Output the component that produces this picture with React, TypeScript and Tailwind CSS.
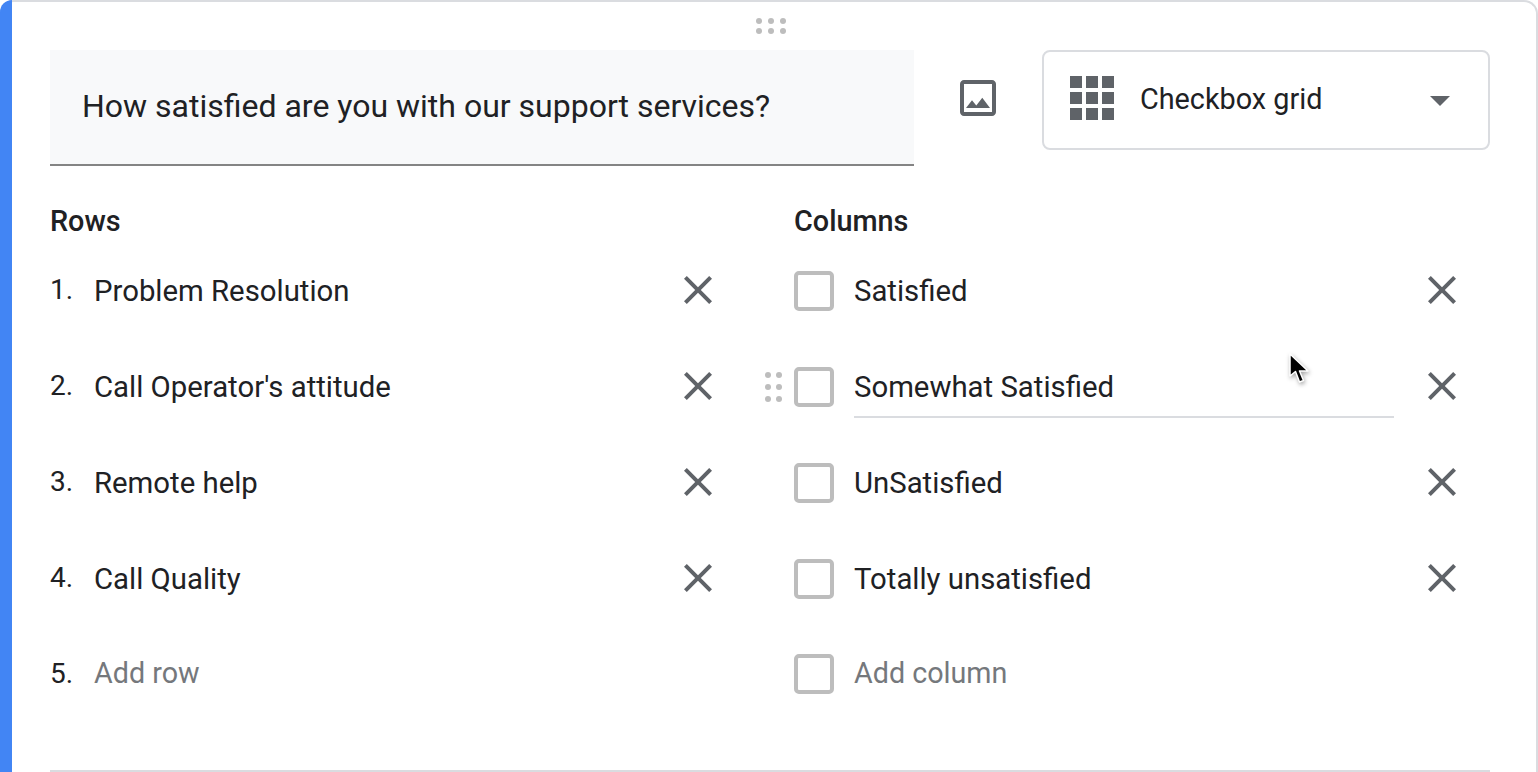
const font = { fontFamily: "Roboto, sans-serif" };

const rows = ["Problem Resolution", "Call Operator's attitude", "Remote help", "Call Quality"];
const columns = ["Satisfied", "Somewhat Satisfied", "UnSatisfied", "Totally unsatisfied"];

function CloseIcon() {
  return (
    <svg width="48" height="48" viewBox="0 0 24 24" fill="#5f6368" className="shrink-0">
      <path d="M19 6.41L17.59 5 12 10.59 6.41 5 5 6.41 10.59 12 5 17.59 6.41 19 12 13.41 17.59 19 19 17.59 13.41 12z" />
    </svg>
  );
}

function Dots({ cols, rowsCount, gapX, gapY }: { cols: number; rowsCount: number; gapX: number; gapY: number }) {
  const dots = [];
  for (let r = 0; r < rowsCount; r++) {
    for (let c = 0; c < cols; c++) {
      dots.push(<circle key={`${r}-${c}`} cx={3 + c * gapX} cy={3 + r * gapY} r="3" fill="#bdbdbd" />);
    }
  }
  return (
    <svg width={6 + (cols - 1) * gapX} height={6 + (rowsCount - 1) * gapY}>
      {dots}
    </svg>
  );
}

function Checkbox({ className }: { className?: string }) {
  return <div className={`size-10 shrink-0 rounded-[5px] border-4 border-[#bdbdbd] ${className ?? ""}`} />;
}

function GridIcon() {
  const cells = [0, 16, 32];
  return (
    <svg width="44" height="44" className="mb-1 shrink-0">
      {cells.map((y) => cells.map((x) => <rect key={`${x}-${y}`} x={x} y={y} width="12" height="12" fill="#5f6368" />))}
    </svg>
  );
}

function RowItem({ n, label }: { n: number; label: string }) {
  return (
    <div className="flex h-24 items-center">
      <span className="w-11 shrink-0 text-[28px] text-[#202124]">{n}.</span>
      <span className="w-[580px] pt-1 text-[29.33px] text-[#202124]">{label}</span>
      <CloseIcon />
    </div>
  );
}

function ColumnItem({ label, focused }: { label: string; focused?: boolean }) {
  return (
    <div className="relative flex h-24 items-center">
      {focused && (
        <div className="absolute left-[-29px] top-[34px] flex">
          <Dots cols={2} rowsCount={3} gapX={11} gapY={12} />
        </div>
      )}
      <Checkbox className="mt-0.5" />
      <div className="relative ml-5 flex h-full w-[540px] items-center pt-1 text-[29.33px] text-[#202124]">
        {label}
        {focused && <div className="absolute bottom-4 left-0 h-0.5 w-full bg-[#dadce0]" />}
      </div>
      <div className="ml-6 flex">
        <CloseIcon />
      </div>
    </div>
  );
}

export default function App() {
  return (
    <div className="relative h-[772px] w-[1538px] overflow-hidden bg-white" style={font}>
      <div className="flex h-full rounded-t-[14px] border-t-2 border-r-2 border-[#dadce0]">
        <div className="-mt-0.5 w-3 shrink-0 rounded-tl-[12px] bg-[#4285f4]" />
        <div className="flex min-w-0 flex-1 flex-col pl-[38px] pr-[46px]">
          <div className="flex h-12 items-center justify-center pl-[2px]">
            <Dots cols={3} rowsCount={2} gapX={12} gapY={10} />
          </div>

          <div className="flex items-start">
            <div className="flex h-[116px] w-[864px] shrink-0 items-center border-b-2 border-[#848484] bg-[#f8f9fa] pb-[3px] pl-8 text-[32px] text-[#202124]">
              How satisfied are you with our support services?
            </div>
            <div className="ml-10 mt-6 flex">
              <svg width="48" height="48" viewBox="0 0 24 24" fill="#5f6368">
                <path d="M19 5v14H5V5h14m0-2H5c-1.1 0-2 .9-2 2v14c0 1.1.9 2 2 2h14c1.1 0 2-.9 2-2V5c0-1.1-.9-2-2-2zm-4.86 8.86l-3 3.87L9 13.14 6 17h12l-3.86-5.14z" />
              </svg>
            </div>
            <div className="ml-10 flex h-[100px] w-[448px] items-center rounded-lg border-2 border-[#dadce0] pl-[26px] pr-[38px]">
              <GridIcon />
              <span className="ml-[26px] flex-1 text-[28.8px] text-[#202124]">Checkbox grid</span>
              <div className="mt-0.5 h-0 w-0 border-x-[10px] border-t-[10px] border-x-transparent border-t-[#5f6368]" />
            </div>
          </div>

          <div className="mt-[37px] grid flex-1 grid-cols-[744px_1fr]">
            <div>
              <div className="h-[39px] text-[28.8px] font-medium leading-[36px] text-[#202124]">Rows</div>
              {rows.map((label, i) => (
                <RowItem key={label} n={i + 1} label={label} />
              ))}
              <div className="flex h-24 items-center">
                <span className="w-11 text-[28px] text-[#202124]">5.</span>
                <span className="text-[28.7px] text-[#75787c]">Add row</span>
              </div>
            </div>
            <div>
              <div className="h-[39px] text-[28.8px] font-medium leading-[36px] text-[#202124]">Columns</div>
              {columns.map((label, i) => (
                <ColumnItem key={label} label={label} focused={i === 1} />
              ))}
              <div className="flex h-24 items-center">
                <Checkbox />
                <span className="ml-5 text-[28.7px] text-[#75787c]">Add column</span>
              </div>
            </div>
          </div>

          <div className="h-0.5 w-[1440px] shrink-0 bg-[#dadce0]" />
        </div>
      </div>

      {/* mouse pointer */}
      <svg width="30" height="40" viewBox="0 0 30 40" className="absolute left-[1284px] top-[348px] drop-shadow-[1px_2px_2px_rgba(0,0,0,0.35)]">
        <path d="M6 6 L6 28 L11.5 23.5 L15.5 34 L19.5 32.5 L15.5 23 L24 23 Z" fill="#000" stroke="#fff" strokeWidth="1.5" strokeLinejoin="round" />
      </svg>
    </div>
  );
}
